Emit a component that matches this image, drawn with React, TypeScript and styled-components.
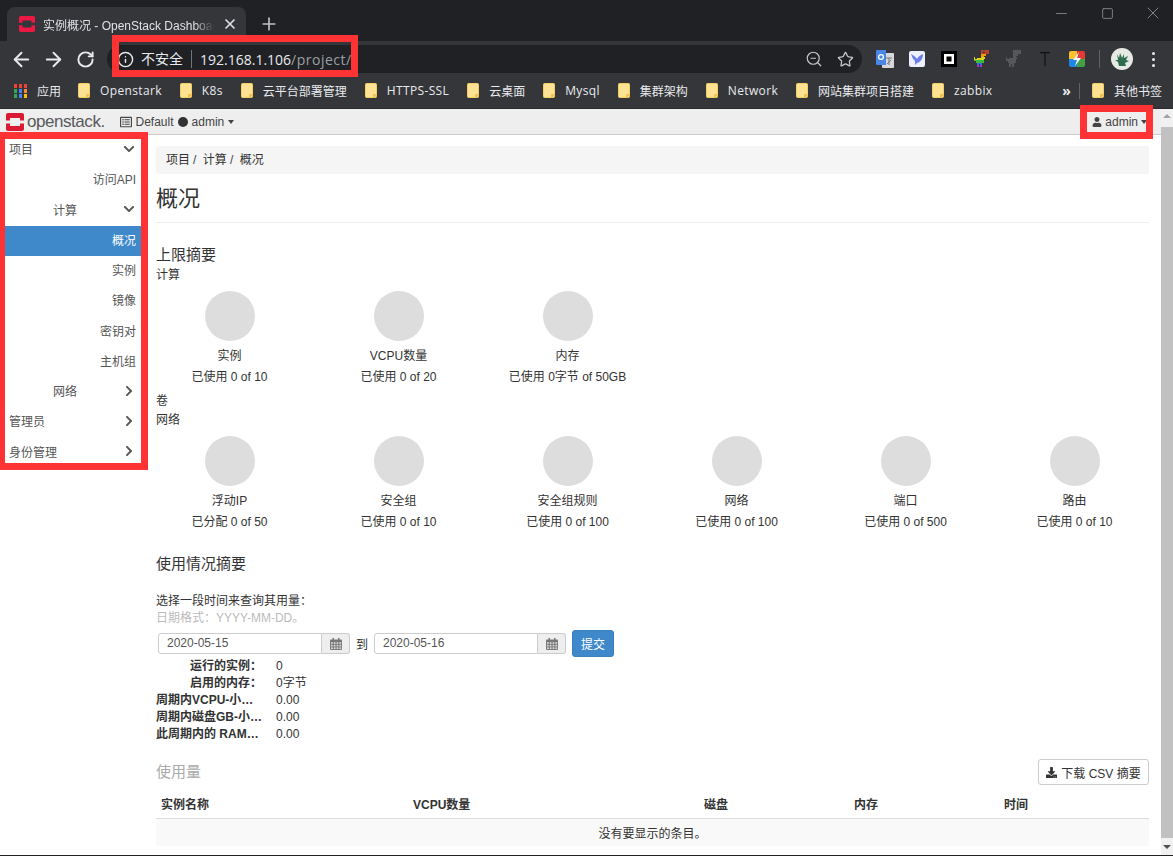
import React from 'react';
import styled, { createGlobalStyle } from 'styled-components';
import { ArrowLeft, ArrowRight, RotateCw, ZoomOut, Star, Info, X, Plus, Minus, Square } from 'lucide-react';
import { FaChevronDown, FaChevronRight, FaUser, FaDownload, FaRegListAlt } from 'react-icons/fa';

const GlobalStyle = createGlobalStyle`
  html, body {
    margin: 0;
    padding: 0;
    overflow: hidden;
    background: #fff;
  }
  * { box-sizing: border-box; }
`;

const Shell = styled.div`
  position: relative;
  width: 1173px;
  height: 856px;
  overflow: hidden;
  display: flex;
  flex-direction: column;
  font-family: "Liberation Sans", "Noto Sans CJK SC", sans-serif;
  font-size: 12px;
  color: #333;
  border-bottom: 1px solid #222;
`;

/* browser chrome */
const TabStrip = styled.div`
  height: 41px;
  background: #202124;
  display: flex;
  align-items: flex-end;
  padding-left: 7px;
`;

const Tab = styled.div`
  width: 239px;
  height: 34px;
  background: #35363a;
  border-radius: 8px 8px 0 0;
  display: flex;
  align-items: center;
  padding: 0 8px 0 12px;
  color: #dee1e6;
  gap: 8px;
`;

const TabTitle = styled.span`
  flex: 1;
  overflow: hidden;
  white-space: nowrap;
  font-size: 12px;
  -webkit-mask-image: linear-gradient(to right, #000 88%, transparent);
  mask-image: linear-gradient(to right, #000 88%, transparent);
`;

const NewTab = styled.div`
  margin-left: 13px;
  height: 34px;
  display: flex;
  align-items: center;
  color: #bdc1c6;
`;

const WindowControls = styled.div`
  margin: 0 -3px 0 auto;
  display: flex;
  align-self: flex-start;
  height: 26px;
  color: #8a8c8f;
`;

const WindowButton = styled.div`
  width: 46px;
  display: flex;
  align-items: center;
  justify-content: center;
`;

const Toolbar = styled.div`
  height: 32px;
  background: #35363a;
  display: flex;
  align-items: flex-start;
  padding: 4px 0 0 5px;
  color: #e8eaed;
`;

const NavButton = styled.div`
  width: 32px;
  height: 28px;
  display: flex;
  align-items: center;
  justify-content: center;
`;

const Omnibox = styled.div`
  margin-left: 6px;
  width: 755px;
  height: 28px;
  background: #202124;
  border-radius: 14px;
  display: flex;
  align-items: center;
  padding: 0 8px 0 10px;
`;

const Insecure = styled.span`
  margin-left: 7px;
  font-size: 14px;
  color: #e8eaed;
  padding-right: 8px;
  border-right: 1px solid #70757a;
  line-height: 18px;
`;

const Host = styled.span`
  margin-left: 8px;
  font-family: "Open Sans", sans-serif;
  font-size: 14px;
  color: #e8eaed;
`;

const UrlPath = styled.span`
  font-family: "Open Sans", sans-serif;
  font-size: 14px;
  letter-spacing: 0.5px;
  color: #9aa0a6;
`;

const OmniIcons = styled.div`
  margin-left: auto;
  display: flex;
  align-items: center;
  gap: 14px;
  color: #c4c7ca;
`;

const Extensions = styled.div`
  display: flex;
  align-items: center;
  height: 28px;
  margin-left: 7px;
`;

const ExtSlot = styled.div`
  width: 32px;
  height: 28px;
  display: flex;
  align-items: center;
  justify-content: center;
`;

const ExtDivider = styled.div`
  width: 1px;
  height: 18px;
  background: #5f6368;
  margin: 0 11px 0 6px;
`;

const Avatar = styled.div`
  width: 22px;
  height: 22px;
  border-radius: 50%;
  background: #e7e9e4;
  display: flex;
  align-items: center;
  justify-content: center;
  overflow: hidden;
`;

const MenuDots = styled.div`
  margin-left: 19px;
  display: flex;
  flex-direction: column;
  gap: 3px;

  i {
    width: 3px;
    height: 3px;
    border-radius: 50%;
    background: #e8eaed;
    display: block;
  }
`;

const BookmarkBar = styled.div`
  height: 36px;
  background: #35363a;
  display: flex;
  align-items: center;
  padding: 0 0 0 14px;
  color: #e8eaed;
  font-size: 12px;
  border-bottom: 1px solid #2a2b2e;
  font-family: "Open Sans", "Noto Sans CJK SC", sans-serif;
`;

const Bookmark = styled.div`
  display: flex;
  align-items: center;
  gap: 10px;
  margin-right: ${p => p.$gap ?? 18}px;
  white-space: nowrap;
  letter-spacing: ${p => (p.$latin ? 0.35 : 0)}px;
`;

const BookmarkEnd = styled.div`
  margin-left: auto;
  display: flex;
  align-items: center;
  padding-right: 11px;
`;

const Chevrons = styled.span`
  font-size: 14px;
  font-weight: 700;
  margin-right: 8px;
`;

const BookmarkDivider = styled.div`
  width: 1px;
  height: 16px;
  background: #5f6368;
  margin-right: 12px;
`;

/* page */
const Viewport = styled.div`
  flex: 1;
  min-height: 0;
  display: flex;
`;

const Page = styled.div`
  flex: 1;
  min-width: 0;
  display: flex;
  flex-direction: column;
`;

const ScrollTrack = styled.div`
  width: 12px;
  background: #f1f1f1;
  display: flex;
  flex-direction: column;
  align-items: center;
  padding: 5px 0 6px;
`;

const ScrollThumb = styled.div`
  flex: 1;
  width: 12px;
  margin: 9px 0 7px;
  background: #c1c1c1;
`;

const Arrow = styled.div`
  width: 0;
  height: 0;
  border-left: 4px solid transparent;
  border-right: 4px solid transparent;
  ${p => (p.$up ? 'border-bottom: 4px solid #a3a3a3;' : 'border-top: 4px solid #505050;')}
`;

const Navbar = styled.div`
  height: 26px;
  background: #eee;
  border-bottom: 1px solid #ccc;
  display: flex;
  align-items: center;
  padding: 0 14px 0 6px;
  color: #444;
`;

const LogoMark = styled.svg`
  flex-shrink: 0;
`;

const Wordmark = styled.span`
  margin-left: 3px;
  font-family: "Liberation Sans", sans-serif;
  font-size: 17px;
  letter-spacing: -0.45px;
  color: #58595b;
  width: 92.5px;
`;

const ProjectPicker = styled.div`
  display: flex;
  align-items: center;
  gap: 4px;
`;

const Dot = styled.span`
  width: 10px;
  height: 10px;
  border-radius: 50%;
  background: #333;
`;

const Caret = styled.span`
  width: 0;
  height: 0;
  border-left: 3.5px solid transparent;
  border-right: 3.5px solid transparent;
  border-top: 4px solid #444;
`;

const UserMenu = styled.div`
  margin-left: auto;
  display: flex;
  align-items: center;
  gap: 3px;
`;

const Body = styled.div`
  flex: 1;
  min-height: 0;
  display: flex;
`;

const Sidebar = styled.nav`
  width: 136px;
  margin-left: 5px;
  flex-shrink: 0;
  color: #555;
`;

const NavRow = styled.div`
  height: 30.25px;
  display: flex;
  align-items: center;
  justify-content: ${p => (p.$right ? 'flex-end' : 'space-between')};
  padding: 0 ${p => (p.$right ? 5 : 6)}px 3px ${p => p.$indent ?? 4}px;
  background: ${p => (p.$active ? '#3f88c9' : 'transparent')};
  color: ${p => (p.$active ? '#fff' : '#555')};
`;

const Main = styled.main`
  flex: 1;
  min-width: 0;
  padding: 11px 12px 0 15px;
`;

const Breadcrumb = styled.div`
  height: 28px;
  background: #f5f5f5;
  border-radius: 3px;
  display: flex;
  align-items: center;
  padding: 0 0 3px 10px;
`;

const Crumb = styled.span`
  &:not(:last-child)::after {
    content: "/";
    margin: 0 6.5px 0 3px;
    color: #444;
  }
`;

const PageHeader = styled.h1`
  margin: 0;
  height: 49px;
  border-bottom: 1px solid #eee;
  font-size: 22px;
  line-height: 50px;
  font-weight: 400;
  color: #333;
`;

const SectionTitle = styled.h3`
  margin: ${p => p.$top ?? 0}px 0 0;
  font-size: 15px;
  font-weight: 400;
  line-height: 23px;
  color: ${p => (p.$muted ? '#aaa' : '#333')};
`;

const GroupLabel = styled.div`
  line-height: 19px;
`;

const PieGrid = styled.div`
  display: grid;
  grid-template-columns: repeat(6, 169px);
  margin: 6px 0 0 -11px;
`;

const PieCell = styled.div`
  display: flex;
  flex-direction: column;
  align-items: center;
  height: ${p => (p.$compact ? 105 : 101)}px;
`;

const Pie = styled.div`
  width: 50px;
  height: 50px;
  border-radius: 50%;
  background: #ddd;
  margin-bottom: 5px;
`;

const PieLine = styled.div`
  line-height: 21px;
  white-space: nowrap;
`;

const Hint = styled.div`
  margin-top: ${p => p.$top ?? 0}px;
  line-height: 17px;
  color: ${p => (p.$muted ? '#bbb' : '#333')};
`;

const DateForm = styled.div`
  display: flex;
  align-items: center;
  margin: 3px 0 0 2px;
  height: 27px;
`;

const DateGroup = styled.div`
  display: flex;
  width: 192px;
  height: 21px;
`;

const DateInput = styled.div`
  flex: 1;
  border: 1px solid #ccc;
  border-radius: 3px 0 0 3px;
  padding-left: 8px;
  line-height: 18px;
  color: #555;
`;

const DateAddon = styled.div`
  width: 28px;
  border: 1px solid #ccc;
  border-left: 0;
  border-radius: 0 3px 3px 0;
  background: #eee;
  display: flex;
  align-items: center;
  justify-content: center;
`;

const To = styled.span`
  width: 24px;
  text-align: center;
`;

const Submit = styled.button`
  margin-left: 6px;
  width: 42px;
  height: 27px;
  border: 1px solid #3a7fbd;
  border-radius: 3px;
  background: #3f88c9;
  color: #fff;
  font: inherit;
  padding: 0;
`;

const Stats = styled.dl`
  margin: 1px 0 0;
  display: grid;
  grid-template-columns: 106px 1fr;
  column-gap: 14px;
  grid-auto-rows: 17px;
  line-height: 17px;

  dt {
    font-weight: 700;
    text-align: right;
    overflow: hidden;
    white-space: nowrap;
    text-overflow: ellipsis;
  }

  dd {
    margin: 0;
  }
`;

const UsageHeader = styled.div`
  display: flex;
  justify-content: space-between;
  align-items: flex-start;
  margin-top: 16px;
`;

const CsvButton = styled.button`
  height: 26px;
  width: 111px;
  border: 1px solid #ccc;
  border-radius: 3px;
  background: #fff;
  color: #333;
  font: inherit;
  padding: 0;
  display: flex;
  align-items: center;
  justify-content: center;
  gap: 4px;
`;

const UsageTable = styled.table`
  width: 100%;
  margin-top: 5px;
  border-collapse: collapse;
  table-layout: fixed;

  th {
    text-align: left;
    font-weight: 700;
    padding: 0 5px;
    height: 28px;
    border-bottom: 1px solid #ddd;
  }

  th:nth-child(1) { width: 252px; }
  th:nth-child(2) { width: 291px; }
  th:nth-child(3), th:nth-child(4) { width: 150px; }

  td {
    height: 28px;
    text-align: center;
    background: #f9f9f9;
  }
`;

/* annotations painted over the screenshot */
const Mark = styled.div`
  position: absolute;
  left: ${p => p.$x}px;
  top: ${p => p.$y}px;
  width: ${p => p.$w}px;
  height: ${p => p.$h}px;
  border: 7px solid #ff3333;
  border-left-width: ${p => p.$left ?? 7}px;
  pointer-events: none;
`;

const OpenStackMark = ({ size, color }: { size: number; color: string }) => (
  <LogoMark width={size} height={size} viewBox="0 0 18 18">
    <path fill={color} d="M2 0H16a2 2 0 0 1 2 2V7.5H14V5H4V7.5H0V2a2 2 0 0 1 2-2Z" />
    <path fill={color} d="M0 10.5H4V13H14V10.5H18V16a2 2 0 0 1-2 2H2a2 2 0 0 1-2-2Z" />
  </LogoMark>
);

const Folder = () => (
  <svg width="12" height="15" viewBox="0 0 12 15">
    <rect x="0.5" y="0.5" width="11" height="14" rx="1" fill="#fde293" stroke="#f6cf62" />
    <path fill="#f2c14e" d="M12 11V12L9 15H8V11Z" />
  </svg>
);

const AppsGrid = () => {
  const colors = ['#ea4335', '#ea4335', '#ea4335', '#34a853', '#4285f4', '#f4883c', '#34a853', '#4285f4', '#fbbc04'];
  return (
    <svg width="13" height="14" viewBox="0 0 13 14">
      {colors.map((c, i) => (
        <rect key={i} x={(i % 3) * 5} y={Math.floor(i / 3) * 5} width="3" height="4" fill={c} />
      ))}
    </svg>
  );
};

const dinoPath = 'M8 0H16V4H13V6H11V7H12V9H11V13H9V17H7V14H6V17H4V13H3V11H1V7H2V9H4V8H8Z';

const Dino = ({ color }: { color: string }) => (
  <svg width="17" height="18" viewBox="0 0 17 18">
    <path fill={color} d={dinoPath} />
  </svg>
);

const RainbowDino = () => (
  <svg width="17" height="18" viewBox="0 0 17 18">
    <defs>
      <linearGradient id="rainbow" x1="0" y1="0" x2="0" y2="1">
        <stop offset="0.24" stopColor="#b5432f" />
        <stop offset="0.24" stopColor="#f39c12" />
        <stop offset="0.44" stopColor="#f39c12" />
        <stop offset="0.44" stopColor="#d8d81a" />
        <stop offset="0.6" stopColor="#d8d81a" />
        <stop offset="0.6" stopColor="#3db83d" />
        <stop offset="0.76" stopColor="#3db83d" />
        <stop offset="0.76" stopColor="#2f6fdb" />
        <stop offset="0.86" stopColor="#2f6fdb" />
        <stop offset="0.86" stopColor="#b52fd6" />
      </linearGradient>
    </defs>
    <path fill="url(#rainbow)" d={dinoPath} />
    <rect x="10" y="1.5" width="1.5" height="1.5" fill="#35363a" />
  </svg>
);

const ExtensionIcons = () => (
  <>
    <ExtSlot>
      <svg width="18" height="18" viewBox="0 0 18 18">
        <rect x="6" y="3" width="12" height="15" rx="1" fill="#d6d8db" />
        <path d="M10 8h6M13 8v7M11 14l4-4" stroke="#777" strokeWidth="1" fill="none" />
        <path d="M1 0H10V15H1a1 1 0 0 1-1-1V1a1 1 0 0 1 1-1Z" fill="#4a86e8" />
        <circle cx="5" cy="7" r="2.4" fill="none" stroke="#fff" strokeWidth="1.3" />
      </svg>
    </ExtSlot>
    <ExtSlot>
      <svg width="16" height="16" viewBox="0 0 16 16">
        <rect width="16" height="16" rx="2" fill="#eef0fb" />
        <path d="M2 3C5 5 7 6 8 8C9 6 11 4 14 3C14 7 12 11 8 12L6 14C6 12 6 11 6 10C4 8 3 6 2 3Z" fill="#6a7fec" />
      </svg>
    </ExtSlot>
    <ExtSlot>
      <svg width="16" height="16" viewBox="0 0 16 16">
        <rect width="16" height="16" fill="#000" />
        <rect x="3" y="3" width="10" height="10" fill="#fff" />
        <rect x="5.5" y="5.5" width="5" height="5" fill="#000" />
      </svg>
    </ExtSlot>
    <ExtSlot><RainbowDino /></ExtSlot>
    <ExtSlot><Dino color="#55575a" /></ExtSlot>
    <ExtSlot>
      <svg width="14" height="16" viewBox="0 0 14 16">
        <path d="M2 1H12V2.2H7.6V15H6.4V2.2H2Z" fill="#111" />
      </svg>
    </ExtSlot>
    <ExtSlot>
      <svg width="16" height="16" viewBox="0 0 16 16">
        <path d="M2 0H8V8H0V2a2 2 0 0 1 2-2Z" fill="#fbc02d" />
        <path d="M8 0H14a2 2 0 0 1 2 2V8H8Z" fill="#e53935" />
        <path d="M0 8H8V16H2a2 2 0 0 1-2-2Z" fill="#1e88e5" />
        <path d="M8 8H16V14a2 2 0 0 1-2 2H8Z" fill="#43a047" />
        <path d="M10 1L4 9H8L6 15L12 7H8Z" fill="#fff" />
      </svg>
    </ExtSlot>
  </>
);

const CalendarIcon = () => (
  <svg width="12" height="12" viewBox="0 0 12 12">
    <rect x="0" y="1.5" width="12" height="10.5" rx="1" fill="#777" />
    <rect x="2.5" y="0" width="1.5" height="3" fill="#777" />
    <rect x="8" y="0" width="1.5" height="3" fill="#777" />
    {[1, 3.8, 6.6, 9.4].map(x =>
      [4.2, 6.8, 9.4].map(y => <rect key={`${x}-${y}`} x={x} y={y} width="1.7" height="1.7" fill="#ddd" />)
    )}
  </svg>
);

const bookmarks = [
  { name: 'Openstark', latin: true },
  { name: 'K8s', latin: true },
  { name: '云平台部署管理' },
  { name: 'HTTPS-SSL', latin: true },
  { name: '云桌面' },
  { name: 'Mysql', latin: true },
  { name: '集群架构' },
  { name: 'Network', latin: true },
  { name: '网站集群项目搭建' },
  { name: 'zabbix', latin: true },
];

const computeQuotas = [
  { name: '实例', used: '已使用 0 of 10' },
  { name: 'VCPU数量', used: '已使用 0 of 20' },
  { name: '内存', used: '已使用 0字节 of 50GB' },
];

const networkQuotas = [
  { name: '浮动IP', used: '已分配 0 of 50' },
  { name: '安全组', used: '已使用 0 of 10' },
  { name: '安全组规则', used: '已使用 0 of 100' },
  { name: '网络', used: '已使用 0 of 100' },
  { name: '端口', used: '已使用 0 of 500' },
  { name: '路由', used: '已使用 0 of 10' },
];

const stats = [
  ['运行的实例\uFF1A', '0'],
  ['启用的内存\uFF1A', '0字节'],
  ['周期内VCPU-小时\uFF1A', '0.00'],
  ['周期内磁盘GB-小时\uFF1A', '0.00'],
  ['此周期内的 RAM-小时\uFF1A', '0.00'],
];

const App = () => {
  return (
    <Shell>
      <GlobalStyle />
      <TabStrip>
        <Tab>
          <OpenStackMark size={16} color="#ed1944" />
          <TabTitle>实例概况 - OpenStack Dashboard</TabTitle>
          <X size={16} strokeWidth={2.5} color="#dee1e6" />
        </Tab>
        <NewTab><Plus size={20} strokeWidth={2} /></NewTab>
        <WindowControls>
          <WindowButton><Minus size={17} strokeWidth={1.2} /></WindowButton>
          <WindowButton><Square size={13} strokeWidth={1.6} /></WindowButton>
          <WindowButton><X size={20} strokeWidth={1.1} /></WindowButton>
        </WindowControls>
      </TabStrip>

      <Toolbar>
        <NavButton><ArrowLeft size={23} strokeWidth={2} /></NavButton>
        <NavButton><ArrowRight size={23} strokeWidth={2} /></NavButton>
        <NavButton><RotateCw size={19} strokeWidth={2.4} /></NavButton>
        <Omnibox>
          <Info size={17} strokeWidth={2} color="#e8eaed" />
          <Insecure>不安全</Insecure>
          <Host>192.168.1.106</Host>
          <UrlPath>/project/</UrlPath>
          <OmniIcons>
            <ZoomOut size={18} strokeWidth={1.6} />
            <Star size={17} strokeWidth={1.8} />
          </OmniIcons>
        </Omnibox>
        <Extensions>
          <ExtensionIcons />
          <ExtDivider />
          <Avatar>
            <svg width="16" height="16" viewBox="0 0 16 16">
              <path fill="#2f6b4f" d="M3 3L5 7L6 2L8 7L10 3L10 7L14 5L12 9L15 10L11 12L12 15H5L4 11L1 9L4 9Z" />
            </svg>
          </Avatar>
          <MenuDots><i /><i /><i /></MenuDots>
        </Extensions>
      </Toolbar>

      <BookmarkBar>
        <Bookmark $gap={17}><AppsGrid />应用</Bookmark>
        {bookmarks.map(b => (
          <Bookmark key={b.name} $latin={b.latin}><Folder />{b.name}</Bookmark>
        ))}
        <BookmarkEnd>
          <Chevrons>»</Chevrons>
          <BookmarkDivider />
          <Bookmark $gap={0}><Folder />其他书签</Bookmark>
        </BookmarkEnd>
      </BookmarkBar>

      <Viewport>
        <Page>
          <Navbar>
            <OpenStackMark size={18} color="#da1a32" />
            <Wordmark>openstack.</Wordmark>
            <ProjectPicker>
              <FaRegListAlt size={12} />
              <span>Default</span>
              <Dot />
              <span>admin</span>
              <Caret />
            </ProjectPicker>
            <UserMenu>
              <FaUser size={10} />
              <span>admin</span>
              <Caret />
            </UserMenu>
          </Navbar>

          <Body>
            <Sidebar>
              <NavRow>项目<FaChevronDown size={12} /></NavRow>
              <NavRow $right>访问API</NavRow>
              <NavRow $indent={48}>计算<FaChevronDown size={12} /></NavRow>
              <NavRow $right $active>概况</NavRow>
              <NavRow $right>实例</NavRow>
              <NavRow $right>镜像</NavRow>
              <NavRow $right>密钥对</NavRow>
              <NavRow $right>主机组</NavRow>
              <NavRow $indent={48}>网络<FaChevronRight size={12} /></NavRow>
              <NavRow>管理员<FaChevronRight size={12} /></NavRow>
              <NavRow>身份管理<FaChevronRight size={12} /></NavRow>
            </Sidebar>

            <Main>
              <Breadcrumb>
                <Crumb>项目</Crumb>
                <Crumb>计算</Crumb>
                <Crumb>概况</Crumb>
              </Breadcrumb>
              <PageHeader>概况</PageHeader>

              <SectionTitle $top={20}>上限摘要</SectionTitle>
              <GroupLabel>计算</GroupLabel>
              <PieGrid>
                {computeQuotas.map(q => (
                  <PieCell key={q.name}>
                    <Pie />
                    <PieLine>{q.name}</PieLine>
                    <PieLine>{q.used}</PieLine>
                  </PieCell>
                ))}
              </PieGrid>
              <GroupLabel>卷</GroupLabel>
              <GroupLabel>网络</GroupLabel>
              <PieGrid>
                {networkQuotas.map(q => (
                  <PieCell key={q.name} $compact>
                    <Pie />
                    <PieLine>{q.name}</PieLine>
                    <PieLine>{q.used}</PieLine>
                  </PieCell>
                ))}
              </PieGrid>

              <SectionTitle $top={11}>使用情况摘要</SectionTitle>
              <Hint $top={18}>{'选择一段时间来查询其用量\uFF1A'}</Hint>
              <Hint $muted>{'日期格式\uFF1AYYYY-MM-DD\u3002'}</Hint>
              <DateForm>
                <DateGroup>
                  <DateInput>2020-05-15</DateInput>
                  <DateAddon><CalendarIcon /></DateAddon>
                </DateGroup>
                <To>到</To>
                <DateGroup>
                  <DateInput>2020-05-16</DateInput>
                  <DateAddon><CalendarIcon /></DateAddon>
                </DateGroup>
                <Submit>提交</Submit>
              </DateForm>
              <Stats>
                {stats.map(([label, value]) => (
                  <React.Fragment key={label}>
                    <dt>{label}</dt>
                    <dd>{value}</dd>
                  </React.Fragment>
                ))}
              </Stats>

              <UsageHeader>
                <SectionTitle $muted $top={1}>使用量</SectionTitle>
                <CsvButton><FaDownload size={11} />下载 CSV 摘要</CsvButton>
              </UsageHeader>
              <UsageTable>
                <thead>
                  <tr>
                    <th>实例名称</th>
                    <th>VCPU数量</th>
                    <th>磁盘</th>
                    <th>内存</th>
                    <th>时间</th>
                  </tr>
                </thead>
                <tbody>
                  <tr><td colSpan={5}>没有要显示的条目。</td></tr>
                </tbody>
              </UsageTable>
            </Main>
          </Body>
        </Page>
        <ScrollTrack>
          <Arrow $up />
          <ScrollThumb />
          <Arrow />
        </ScrollTrack>
      </Viewport>

      <Mark $x={112} $y={35} $w={246} $h={42} />
      <Mark $x={1080} $y={105} $w={73} $h={34} />
      <Mark $x={0} $y={132} $w={148} $h={338} $left={5} />
    </Shell>
  );
};

export default App;
